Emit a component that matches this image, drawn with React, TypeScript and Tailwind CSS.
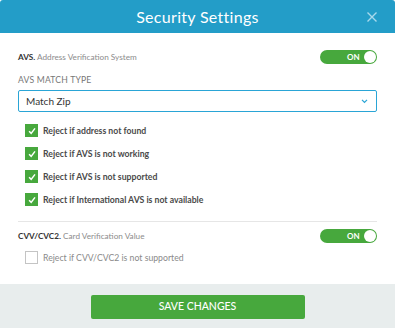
import React from "react";

const Toggle = () => (
  <div className="relative flex h-[14px] w-[57px] items-center rounded-full bg-[#47a83d]">
    <span className="ml-[27px] text-[8px] font-bold leading-none text-white">ON</span>
    <span className="absolute right-[1px] top-[1px] h-[12px] w-[12px] rounded-full bg-white" />
  </div>
);

const Check = ({ checked, label }: { checked: boolean; label: string }) => (
  <div className="flex h-[13px] items-center gap-[5px] pl-[7px]">
    {checked ? (
      <span className="flex h-[13px] w-[13px] items-center justify-center bg-[#47a83d]">
        <svg viewBox="0 0 12 12" className="h-[10px] w-[10px]">
          <path d="M2.5 6.3 L5 8.8 L9.6 2.8" fill="none" stroke="#fff" strokeWidth="1.8" />
        </svg>
      </span>
    ) : (
      <span className="h-[13px] w-[13px] border border-[#c4c4c4] bg-white" />
    )}
    <span
      className={
        checked
          ? "text-[8.7px] leading-[13px] font-bold text-[#4a4a4a]"
          : "text-[8.7px] leading-[13px] text-[#8a8a8a]"
      }
    >
      {label}
    </span>
  </div>
);

export default function App() {
  const rules = [
    "Reject if address not found",
    "Reject if AVS is not working",
    "Reject if AVS is not supported",
    "Reject if International AVS is not available",
  ];
  return (
    <div className="flex h-[328px] w-[395px] flex-col bg-white font-['Lato',sans-serif]">
      <div className="relative flex h-[33px] shrink-0 items-center justify-center rounded-t-[3px] bg-[#239dc8]">
        <span className="text-[16px] tracking-[0.3px] text-white">Security Settings</span>
        <svg viewBox="0 0 10 10" className="absolute right-[18px] top-[12px] h-[10px] w-[10px]">
          <path d="M0.5 0.5 L9.5 9.5 M9.5 0.5 L0.5 9.5" stroke="#a8d9ec" strokeWidth="1.4" />
        </svg>
      </div>

      <div className="flex flex-1 flex-col px-[18px]">
        <div className="mt-[17px] flex items-center justify-between">
          <p className="text-[8.2px] leading-[14px] text-[#8c8c8c]">
            <span className="font-bold text-[#333]">AVS.</span> Address Verification System
          </p>
          <Toggle />
        </div>

        <p className="mt-[10px] text-[8.6px] leading-[12px] tracking-[0.2px] text-[#777]">AVS MATCH TYPE</p>

        <div className="mt-[4px] flex h-[22px] items-center justify-between rounded-[2px] border border-[#2aa5d6] pl-[7px] pr-[8px]">
          <span className="text-[10px] text-[#333]">Match Zip</span>
          <svg viewBox="0 0 8 6" className="h-[5px] w-[7px]">
            <path d="M1 1 L4 4 L7 1" fill="none" stroke="#2aa5d6" strokeWidth="1.5" />
          </svg>
        </div>

        <div className="mt-[12px] flex flex-col gap-[10px]">
          {rules.map((r) => (
            <Check key={r} checked label={r} />
          ))}
        </div>

        <div className="mt-[15px] h-px bg-[#e6e6e6]" />

        <div className="mt-[7px] flex items-center justify-between">
          <p className="text-[8.2px] leading-[14px] text-[#8c8c8c]">
            <span className="font-bold text-[#333]">CVV/CVC2.</span> Card Verification Value
          </p>
          <Toggle />
        </div>

        <div className="mt-[8px]">
          <Check checked={false} label="Reject if CVV/CVC2 is not supported" />
        </div>
      </div>

      <div className="flex h-[44px] shrink-0 justify-center bg-[#e8eded] pt-[11px]">
        <button className="h-[24px] w-[214px] rounded-[2px] bg-[#47a83d] text-[10.5px] font-medium text-white">
          SAVE CHANGES
        </button>
      </div>
    </div>
  );
}
